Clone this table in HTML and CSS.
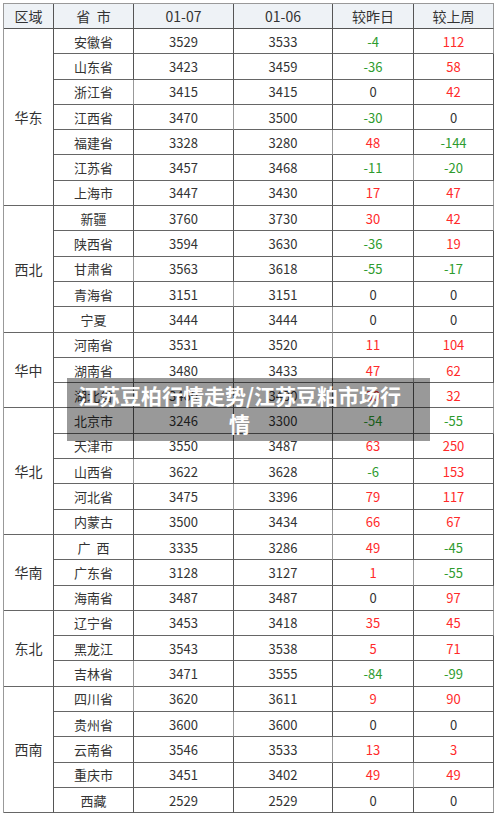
FILE: index.html
```html
<!DOCTYPE html>
<html lang="zh">
<head>
<meta charset="utf-8">
<title>江苏豆粕行情</title>
<link rel="stylesheet" href="styles.css">
</head>
<body>
<div class="page">
  <div class="table">
    <div class="c h">区域</div><div class="c h">省&nbsp;&nbsp;市</div><div class="c h">01-07</div><div class="c h">01-06</div><div class="c h">较昨日</div><div class="c h">较上周</div>

    <div class="c region r7">华东</div>
    <div class="c">安徽省</div><div class="c">3529</div><div class="c">3533</div><div class="c g">-4</div><div class="c r">112</div>
    <div class="c">山东省</div><div class="c">3423</div><div class="c">3459</div><div class="c g">-36</div><div class="c r">58</div>
    <div class="c">浙江省</div><div class="c">3415</div><div class="c">3415</div><div class="c">0</div><div class="c r">42</div>
    <div class="c">江西省</div><div class="c">3470</div><div class="c">3500</div><div class="c g">-30</div><div class="c">0</div>
    <div class="c">福建省</div><div class="c">3328</div><div class="c">3280</div><div class="c r">48</div><div class="c g">-144</div>
    <div class="c">江苏省</div><div class="c">3457</div><div class="c">3468</div><div class="c g">-11</div><div class="c g">-20</div>
    <div class="c">上海市</div><div class="c">3447</div><div class="c">3430</div><div class="c r">17</div><div class="c r">47</div>

    <div class="c region r5">西北</div>
    <div class="c">新疆</div><div class="c">3760</div><div class="c">3730</div><div class="c r">30</div><div class="c r">42</div>
    <div class="c">陕西省</div><div class="c">3594</div><div class="c">3630</div><div class="c g">-36</div><div class="c r">19</div>
    <div class="c">甘肃省</div><div class="c">3563</div><div class="c">3618</div><div class="c g">-55</div><div class="c g">-17</div>
    <div class="c">青海省</div><div class="c">3151</div><div class="c">3151</div><div class="c">0</div><div class="c">0</div>
    <div class="c">宁夏</div><div class="c">3444</div><div class="c">3444</div><div class="c">0</div><div class="c">0</div>

    <div class="c region r3">华中</div>
    <div class="c">河南省</div><div class="c">3531</div><div class="c">3520</div><div class="c r">11</div><div class="c r">104</div>
    <div class="c">湖南省</div><div class="c">3480</div><div class="c">3433</div><div class="c r">47</div><div class="c r">62</div>
    <div class="c">湖北省</div><div class="c">3460</div><div class="c">3430</div><div class="c r">30</div><div class="c r">32</div>

    <div class="c region r5">华北</div>
    <div class="c">北京市</div><div class="c">3246</div><div class="c">3300</div><div class="c g">-54</div><div class="c g">-55</div>
    <div class="c">天津市</div><div class="c">3550</div><div class="c">3487</div><div class="c r">63</div><div class="c r">250</div>
    <div class="c">山西省</div><div class="c">3622</div><div class="c">3628</div><div class="c g">-6</div><div class="c r">153</div>
    <div class="c">河北省</div><div class="c">3475</div><div class="c">3396</div><div class="c r">79</div><div class="c r">117</div>
    <div class="c">内蒙古</div><div class="c">3500</div><div class="c">3434</div><div class="c r">66</div><div class="c r">67</div>

    <div class="c region r3">华南</div>
    <div class="c">广&nbsp;&nbsp;西</div><div class="c">3335</div><div class="c">3286</div><div class="c r">49</div><div class="c g">-45</div>
    <div class="c">广东省</div><div class="c">3128</div><div class="c">3127</div><div class="c r">1</div><div class="c g">-55</div>
    <div class="c">海南省</div><div class="c">3487</div><div class="c">3487</div><div class="c">0</div><div class="c r">97</div>

    <div class="c region r3">东北</div>
    <div class="c">辽宁省</div><div class="c">3453</div><div class="c">3418</div><div class="c r">35</div><div class="c r">45</div>
    <div class="c">黑龙江</div><div class="c">3543</div><div class="c">3538</div><div class="c r">5</div><div class="c r">71</div>
    <div class="c">吉林省</div><div class="c">3471</div><div class="c">3555</div><div class="c g">-84</div><div class="c g">-99</div>

    <div class="c region r5">西南</div>
    <div class="c">四川省</div><div class="c">3620</div><div class="c">3611</div><div class="c r">9</div><div class="c r">90</div>
    <div class="c">贵州省</div><div class="c">3600</div><div class="c">3600</div><div class="c">0</div><div class="c">0</div>
    <div class="c">云南省</div><div class="c">3546</div><div class="c">3533</div><div class="c r">13</div><div class="c r">3</div>
    <div class="c">重庆市</div><div class="c">3451</div><div class="c">3402</div><div class="c r">49</div><div class="c r">49</div>
    <div class="c">西藏</div><div class="c">2529</div><div class="c">2529</div><div class="c">0</div><div class="c">0</div>
  </div>
  <div class="caption">江苏豆柏行情走势/江苏豆粕市场行情</div>
</div>
</body>
</html>
```
FILE: styles.css
```css
html, body {
  margin: 0;
  padding: 0;
  background: #fff;
}
.page {
  position: relative;
  width: 500px;
  height: 820px;
  padding: 3px 0 0 3px;
  box-sizing: border-box;
  font-family: "Noto Sans CJK SC", "Liberation Sans", sans-serif;
  font-size: 13px;
  color: #333;
}
.table {
  display: grid;
  grid-template-columns: 50px 80px 100px 99px 81px 80px;
  grid-template-rows: 25px repeat(31, 25.3px);
  border-top: 1px solid #999;
  border-left: 1px solid #999;
  width: max-content;
}
.c {
  display: flex;
  align-items: center;
  justify-content: center;
  border-right: 1px solid #555;
  border-bottom: 1px solid #666;
  white-space: nowrap;
  line-height: 1;
}
.c:nth-child(6n) { border-right-color: #999; }
.h {
  background: #eef2f6;
  font-size: 14px;
  border-bottom-color: #555;
}
.region {
  grid-column: 1;
  font-size: 14px;
}
.r7 { grid-row: span 7; }
.r5 { grid-row: span 5; }
.r3 { grid-row: span 3; }
.r { color: #ff2a2a; }
.g { color: #2e9b2e; }
.caption {
  position: absolute;
  left: 67px;
  top: 378px;
  width: 363px;
  height: 63px;
  box-sizing: border-box;
  padding: 3px 22px 0 4px;
  background: rgba(0, 0, 0, 0.4);
  color: #fff;
  font-weight: bold;
  font-size: 21px;
  line-height: 28px;
  text-align: center;
}
```
